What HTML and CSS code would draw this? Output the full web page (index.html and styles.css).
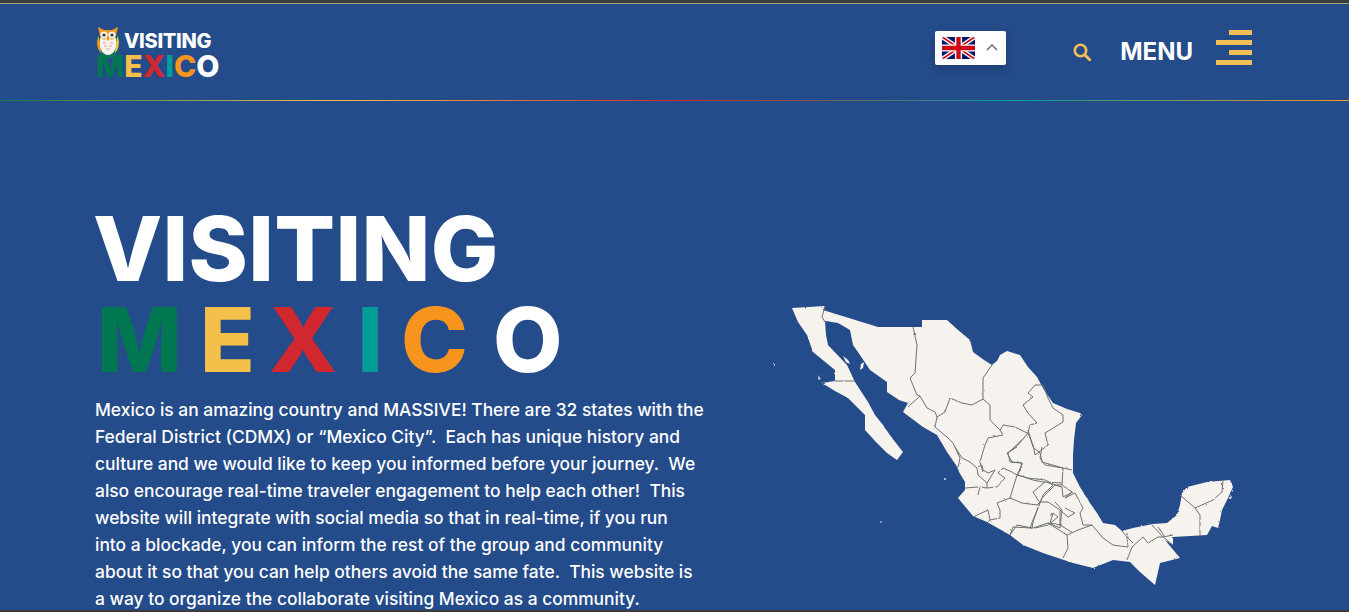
FILE: index.html
```html
<!DOCTYPE html>
<html lang="en">
<head>
<meta charset="utf-8">
<title>Visiting Mexico</title>
<link rel="stylesheet" href="styles.css">
</head>
<body>
<div class="page">
  <header class="header">
    <a class="logo" href="#">
      <svg class="owl" viewBox="0 0 24 32" width="24" height="32" aria-hidden="true">
        <path d="M2 9 C-1 15 1 24 7 29 L13 32 L18 29 C23 24 25 15 22 9 Z" fill="#0a7a52"/>
        <path d="M2.500 9 C0 15 1 22 5 26 L4 15 Z" fill="#f7941d"/>
        <path d="M21.500 9 C24 15 23 22 19 26 L20 15 Z" fill="#f4c04a"/>
        <path d="M4 11 H20 V20 C19 25 15 28 12 28 C9 28 5 25 4 20 Z" fill="#f6f2ee"/>
        <path d="M2 0 L8 3 H16 L22 0 L20 9 L16 13 L12 10 L8 13 L4 9 Z" fill="#f7941d"/>
        <circle cx="8" cy="8" r="3.600" fill="#f6f2ee"/>
        <circle cx="16" cy="8" r="3.600" fill="#f6f2ee"/>
        <circle cx="8" cy="8" r="1.600" fill="#3a3a3a"/>
        <circle cx="16" cy="8" r="1.600" fill="#3a3a3a"/>
        <path d="M12 10 L10.500 12 L12 14 L13.500 12 Z" fill="#f7941d"/>
        <path d="M7 16 H10 M14 16 H17 M8 19 H11 M13 19 H16 M10 22 H14" stroke="#e8a0a0" stroke-width="1.100"/>
      </svg>
      <span class="logo-top">VISITING</span>
      <span class="logo-bottom"><span class="c-green">M</span><span class="c-yellow">E</span><span class="c-red">X</span><span class="c-teal">I</span><span class="c-orange">C</span><span class="c-white">O</span></span>
    </a>
    <div class="header-actions">
      <div class="lang">
        <svg class="flag" viewBox="0 0 60 40" width="33" height="24" aria-hidden="true">
          <rect width="60" height="40" rx="5" fill="#00136b"/>
          <path d="M2 1 L58 39 M58 1 L2 39" stroke="#fff" stroke-width="8"/>
          <path d="M2 1 L58 39 M58 1 L2 39" stroke="#cf0a14" stroke-width="3"/>
          <path d="M30 0 V40 M0 20 H60" stroke="#fff" stroke-width="13"/>
          <path d="M30 0 V40 M0 20 H60" stroke="#cf0a14" stroke-width="8"/>
        </svg>
        <svg class="chevron" viewBox="0 0 12 8" width="12" height="8" aria-hidden="true">
          <path d="M1 7 L6 2 L11 7" fill="none" stroke="#666" stroke-width="1.400"/>
        </svg>
      </div>
      <svg class="search" viewBox="0 0 18 18" width="18" height="18" aria-hidden="true">
        <circle cx="7.500" cy="7.500" r="5.700" fill="none" stroke="#f1bf58" stroke-width="2.600"/>
        <path d="M11.800 11.800 L17 17" stroke="#f1bf58" stroke-width="3" stroke-linecap="round"/>
      </svg>
      <span class="menu-label">MENU</span>
      <div class="burger">
        <span class="bar bar-short"></span>
        <span class="bar"></span>
        <span class="bar bar-short"></span>
        <span class="bar"></span>
      </div>
    </div>
  </header>
  <div class="rainbow"></div>
  <main class="hero">
    <section class="intro">
      <h1 class="title">
        <span class="title-line title-visiting">VISITING</span>
        <span class="title-line title-mexico"><span class="c-green l-m">M</span><span class="c-yellow l-e">E</span><span class="c-red l-x">X</span><span class="c-teal l-i">I</span><span class="c-orange l-c">C</span><span class="c-white">O</span></span>
      </h1>
      <p class="lead">Mexico is an amazing country and MASSIVE! There are 32 states with the<br>Federal District (CDMX) or “Mexico City”.&nbsp; Each has unique history and<br>culture and we would like to keep you informed before your journey.&nbsp; We<br>also encourage real-time traveler engagement to help each other!&nbsp; This<br>website will integrate with social media so that in real-time, if you run<br>into a blockade, you can inform the rest of the group and community<br>about it so that you can help others avoid the same fate.&nbsp; This website is<br>a way to organize the collaborate visiting Mexico as a community.</p>
    </section>
    <figure class="map">
      <svg viewBox="770 300 470 290" width="470" height="290" aria-label="Map of Mexico">
        <defs>
          <filter id="wobble" filterUnits="userSpaceOnUse" x="770" y="300" width="470" height="290">
            <feTurbulence type="fractalNoise" baseFrequency="0.3" numOctaves="2" seed="4"/>
            <feDisplacementMap in="SourceGraphic" scale="2"/>
          </filter>
        </defs>
        <g class="wobbly">
        <path class="land" d="M792 308 L825 306 L823 310 L878 327 L922 327 L922 320 L947 320 L958 330 L970 340 L973 352 L984 360 L992 365 L997 361 L1000 355 L1007 351 L1020 355 L1028 367 L1037 377 L1044 390 L1053 403 L1067 409 L1080 413 L1082 415 L1076 423 L1074 440 L1073 455 L1073 473 L1080 487 L1090 503 L1097 513 L1103 523 L1115 525 L1122 531 L1133 528 L1153 524 L1167 523 L1177 515 L1180 505 L1182 493 L1187 487 L1207 482 L1230 480 L1233 487 L1227 500 L1222 510 L1220 520 L1218 528 L1212 526 L1207 535 L1173 537 L1173 545 L1165 540 L1180 558 L1160 563 L1155 585 L1140 572 L1130 562 L1113 560 L1093 568 L1073 563 L1043 553 L1023 545 L1010 535 L987 522 L973 516 L958 498 L965 490 L965 482 L959 472 L958 468 L947 452 L937 435 L923 427 L903 412 L908 403 L899 400 L887 392 L887 382 L870 370 L860 355 L853 345 L850 330 L838 323 L825 321 L826 335 L828 345 L847 365 L855 382 L868 402 L875 415 L883 425 L892 438 L903 452 L897 460 L887 453 L875 441 L865 430 L865 415 L848 398 L835 391 L822 383 L835 381 L835 370 L813 352 L807 335 L798 322 Z"/>
        <path class="land" d="M843 356 L848 360 L850 364 L846 362 Z M860 370 L861 364 L864 362 L863 368 Z M818 379 L819 375 L820 380 Z M1228 498 L1232 496 L1231 499 Z"/>
        <circle class="land" cx="774" cy="364" r="1"/>
        <circle class="land" cx="881" cy="522" r="0.800"/>
        <circle class="land" cx="945" cy="479" r="0.900"/>
        <path class="borders" d="M835 381 H855 M825 306 L822 317 L825 322 M913 327 L917 345 L915 373 L910 378 L917 395 L920 396 M908 407 L920 396 L927 408 L935 412 L937 417 L935 427 L947 437 L953 443 L960 458 L958 468 M937 417 L945 412 L950 398 L962 403 L972 405 L983 399 L983 378 L992 365 M983 399 L990 405 L990 420 L1000 430 L1003 425 L1015 427 L1027 433 L1028 433 M1000 430 L1003 435 L988 438 L985 445 L982 455 L980 462 L983 472 M1035 385 L1043 385 L1048 398 L1053 408 L1063 415 L1063 422 L1045 433 L1048 445 L1035 455 M1035 385 L1028 393 L1033 397 L1023 405 L1028 413 L1037 423 L1030 425 L1028 433 L1033 445 L1035 455 M1028 433 L1018 445 L1008 453"/>
        <path class="borders" d="M955 447 L962 458 L970 462 L977 468 L978 475 L987 483 L987 488 L997 487 L1005 478 L998 473 L1003 468 L1012 472 L1017 475 L1022 465 L1022 463 L1012 462 L1007 453 L1017 447 M978 467 L982 465 L983 470 L988 473 L995 470 L987 483 M1017 475 L1010 498 L997 503 L1000 510 L1000 518 L990 520 L987 523 M987 488 L980 487 L978 495 M965 488 L978 487 M973 517 L988 510 L990 520 M1017 475 L1028 478 L1045 480 L1055 485 L1042 498 L1040 503 L1033 492 L1045 482 M1010 498 L1022 503 L1037 505 L1040 502 L1033 522 L1032 528 L1017 525 L1010 535 M1040 502 L1048 502 L1060 510 L1060 525 L1050 523 L1053 513 L1058 517 L1048 525 L1035 528 M1063 468 L1062 485 L1055 485 L1062 487 L1063 497 L1073 492 M1060 510 L1068 517 L1075 513 L1065 508 M1060 525 L1073 533 M1042 447 L1040 458 L1045 465 L1063 468 L1072 470"/>
        <path class="borders" d="M1028 430 L1033 447 L1040 453 L1042 462 L1063 468 M1025 437 L1008 453 L1010 462 L1022 463 L1018 475 L1033 480 L1043 482 L1062 483 M1062 485 L1072 492 L1065 498 L1075 493 L1083 508 L1080 513 L1083 525 L1092 525 L1103 538 L1113 545 L1128 547 L1127 537 L1122 531 M1047 482 L1053 485 L1043 495 L1040 503 L1033 520 L1030 528 L1033 528 L1048 523 L1067 535 L1078 530 L1092 525 M1067 535 L1068 548 L1063 558 M1010 535 L1013 527 L1030 528 M1048 523 L1060 528 L1062 510 L1055 502 M1132 547 L1127 560 M1132 547 L1143 537 L1148 543 L1158 537 L1163 537 L1173 545 M1127 533 L1128 538 L1133 543 M1152 525 L1163 537 L1173 535 M1158 527 L1165 537 M1180 495 L1195 508 L1200 515 L1200 536 M1195 508 L1213 500 L1222 492 L1223 480"/>
        </g>
      </svg>
    </figure>
  </main>
</div>
</body>
</html>
```
FILE: styles.css
```css
* { box-sizing: border-box; }
html, body { margin: 0; height: 612px; overflow: hidden; }
body { background: #244b8a; font-family: Inter, "Open Sans", sans-serif; color: #fff; }
.page {
  height: 612px;
  overflow: hidden;
  border-top: 3px solid #3b3b3b;
  border-bottom: 2px solid #3b3b3b;
  display: flex;
  flex-direction: column;
}
.header {
  height: 97px;
  border-top: 1px solid #a9a66e;
  padding: 0 97px 0 96px;
  display: flex;
  align-items: flex-start;
  justify-content: space-between;
}
.logo {
  position: relative;
  display: block;
  width: 124px;
  height: 56px;
  margin-top: 23px;
  color: #fff;
  text-decoration: none;
}
.owl { position: absolute; left: 0; top: 0; }
.logo-top {
  position: absolute;
  left: 28px;
  top: 4px;
  font-size: 20px;
  line-height: 20px;
  font-weight: 800;
  letter-spacing: -.3px;
}
.logo-bottom {
  position: absolute;
  left: 0;
  top: 27px;
  font-size: 30px;
  line-height: 24px;
  font-weight: 800;
  white-space: nowrap;
}
.header-actions { display: flex; align-items: center; margin-top: 26px; height: 36px; }
.lang {
  width: 71px;
  height: 34px;
  background: #fff;
  border-radius: 2px;
  box-shadow: 0 4px 10px rgba(0, 0, 0, .2);
  display: flex;
  align-items: center;
  padding-left: 7px;
}
.chevron { margin-left: 11px; margin-top: -3px; }
.search { margin-left: 67px; margin-top: 8px; }
.menu-label { margin-left: 29px; font-size: 24px; font-weight: 700; line-height: 30px; margin-top: 7px; }
.burger {
  margin-left: 23px;
  width: 36px;
  height: 35px;
  display: flex;
  flex-direction: column;
  align-items: flex-end;
  justify-content: space-between;
  margin-top: -1px;
}
.bar { display: block; width: 36px; height: 5px; background: #f1bf58; }
.bar-short { width: 23px; }
.rainbow {
  flex: none;
  height: 1px;
  background: linear-gradient(90deg, #0a7a52, #f4c04a 25%, #d0282e 50%, #009e96 75%, #f7941d);
}
.hero { flex: 1; display: flex; padding-left: 95px; min-height: 0; }
.intro { width: 675px; flex: none; padding-top: 102px; }
.title { margin: 0; font-size: 90px; line-height: 91px; font-weight: 800; }
.title-line { display: block; white-space: nowrap; }
.title-visiting { margin-left: -2px; letter-spacing: .3px; }
.title-mexico { margin-left: 2px; letter-spacing: 25px; }
.l-m { letter-spacing: 18px; }
.l-e { letter-spacing: 14px; }
.l-x { letter-spacing: 20px; }
.l-i { letter-spacing: 18px; }
.l-c { letter-spacing: 25px; }
.lead { margin: 11px 0 0; font-size: 17.4px; line-height: 27px; font-weight: 500; white-space: nowrap; }
.map { margin: 199px 0 0 0; flex: none; }
.map svg { display: block; }
.wobbly { filter: url(#wobble); }
.land { fill: #f6f2ee; }
.borders { fill: none; stroke: #6f7174; stroke-width: 1; stroke-linejoin: round; }
.c-green { color: #007750; }
.c-yellow { color: #f4c04a; }
.c-red { color: #d0282e; }
.c-teal { color: #009e96; }
.c-orange { color: #f7941d; }
.c-white { color: #fff; }
```
